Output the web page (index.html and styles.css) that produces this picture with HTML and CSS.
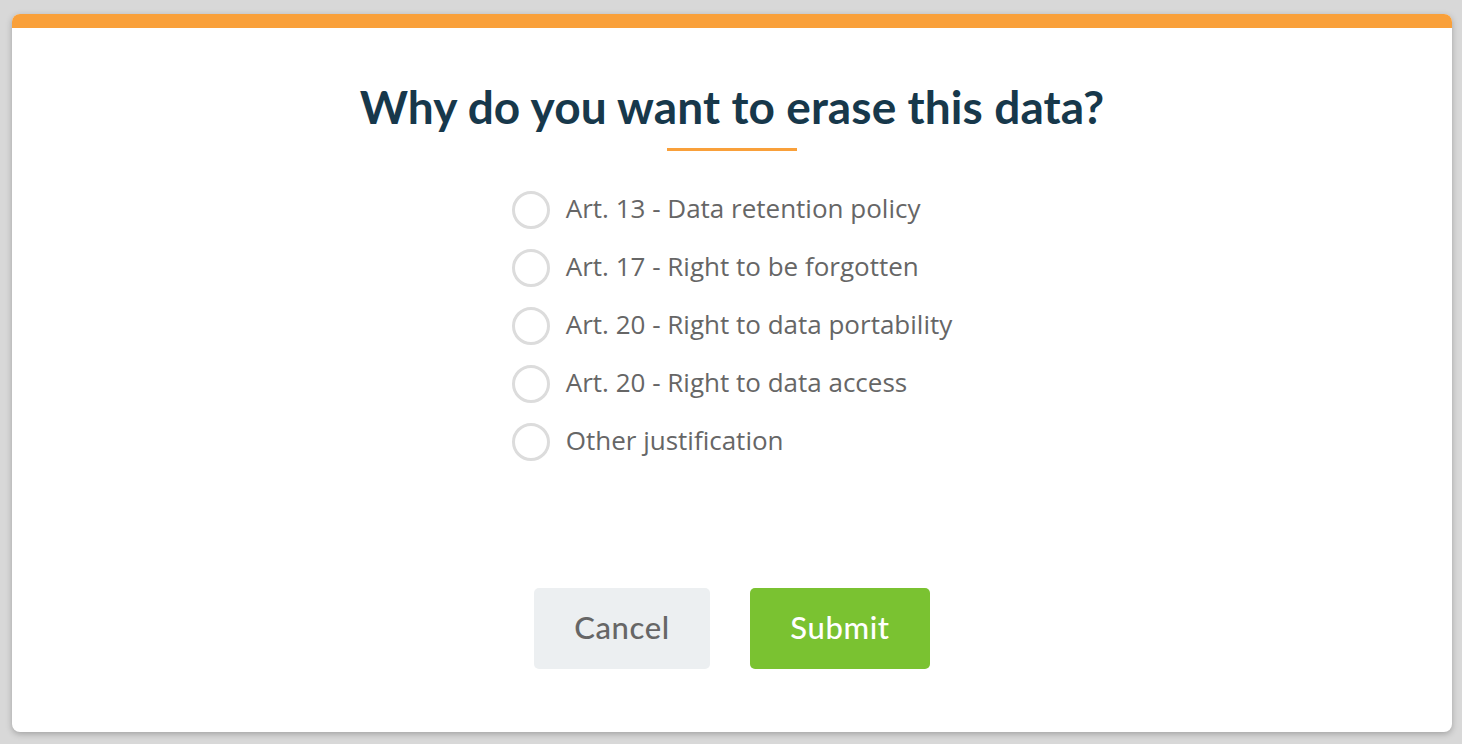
FILE: index.html
```html
<!DOCTYPE html>
<html>
<head>
<meta charset="utf-8">
<link rel="stylesheet" href="styles.css">
</head>
<body>
<div class="modal">
  <div class="modal-bar"></div>
  <div class="modal-body">
    <h1 class="title">Why do you want to erase this data?</h1>
    <div class="title-rule"></div>
    <ul class="options">
      <li class="option"><span class="radio"></span><span class="label">Art. 13 - Data retention policy</span></li>
      <li class="option"><span class="radio"></span><span class="label">Art. 17 - Right to be forgotten</span></li>
      <li class="option"><span class="radio"></span><span class="label">Art. 20 - Right to data portability</span></li>
      <li class="option"><span class="radio"></span><span class="label">Art. 20 - Right to data access</span></li>
      <li class="option"><span class="radio"></span><span class="label">Other justification</span></li>
    </ul>
    <div class="actions">
      <button class="btn btn-cancel">Cancel</button>
      <button class="btn btn-submit">Submit</button>
    </div>
  </div>
</div>
</body>
</html>
```
FILE: styles.css
```css
html, body {
  margin: 0;
  padding: 0;
}
body {
  background: #d8d8d8;
  width: 1462px;
  height: 744px;
  overflow: hidden;
  padding: 14px 10px 0 12px;
  box-sizing: border-box;
}
.modal {
  width: 1440px;
  height: 718px;
  background: #fff;
  border-radius: 8px;
  overflow: hidden;
  box-shadow: 0 2px 6px rgba(0,0,0,0.25);
  display: flex;
  flex-direction: column;
}
.modal-bar {
  height: 14px;
  background: #f9a03a;
  flex: none;
}
.modal-body {
  display: flex;
  flex-direction: column;
  align-items: center;
}
.title {
  margin: 51px 0 0;
  font-family: Lato, "Open Sans", sans-serif;
  font-weight: 700;
  font-size: 46px;
  line-height: 56px;
  letter-spacing: 0.1px;
  color: #17384b;
}
.title-rule {
  width: 130px;
  height: 3px;
  background: #f9a03a;
  margin-top: 13px;
}
.options {
  list-style: none;
  margin: 40px 0 0;
  padding: 0;
  display: flex;
  flex-direction: column;
  gap: 20px;
}
.option {
  display: flex;
  align-items: center;
  gap: 16px;
  height: 38px;
}
.radio {
  width: 38px;
  height: 38px;
  box-sizing: border-box;
  border: 3px solid #dcdcdc;
  border-radius: 50%;
  flex: none;
}
.label {
  font-family: "Open Sans", sans-serif;
  font-size: 26px;
  line-height: 34px;
  color: #666;
  margin-top: -4px;
}
.actions {
  display: flex;
  gap: 40px;
  margin-top: 127px;
}
.btn {
  border: none;
  border-radius: 5px;
  height: 81px;
  padding: 0 0 4px;
  font-family: Lato, "Open Sans", sans-serif;
  font-size: 31px;
  letter-spacing: 0.6px;
  font-weight: 500;
  cursor: pointer;
}
.btn-cancel {
  width: 176px;
  background: #eceff1;
  color: #666;
}
.btn-submit {
  width: 180px;
  background: #7ac231;
  color: #fff;
}
```
